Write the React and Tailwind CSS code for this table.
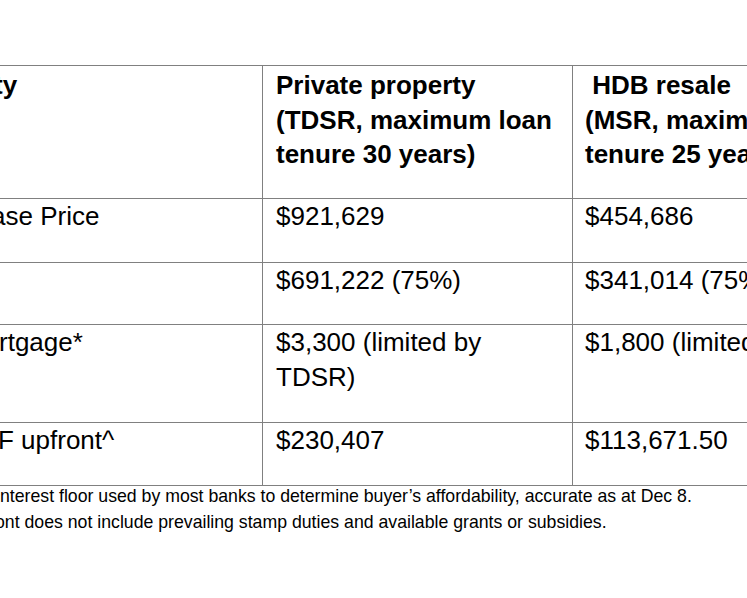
const ROWS = [
  {
    label: "ase Price",
    shift: "-ml-[9px]",
    h: "h-[64px]",
    priv: "$921,629",
    hdb: "$454,686",
  },
  {
    label: "",
    shift: "",
    h: "h-[62px]",
    priv: "$691,222 (75%)",
    hdb: "$341,014 (75%)",
  },
  {
    label: "rtgage*",
    shift: "-ml-[1px]",
    h: "h-[98px]",
    priv: "$3,300 (limited by TDSR)",
    hdb: "$1,800 (limited by MSR)",
  },
  {
    label: "F upfront^",
    shift: "-ml-[2px]",
    h: "h-[63px]",
    priv: "$230,407",
    hdb: "$113,671.50",
  },
];

export default function App() {
  return (
    <div className="w-[747px] h-[598px] overflow-hidden bg-white text-black font-['Liberation_Sans',Arial,sans-serif]">
      <div className="pt-[65px] w-[882px]">
        {/* Table */}
        <div className="border-t border-[#808080] text-[26px] leading-[34.5px]">
          <div className="grid grid-cols-[262px_310px_310px] h-[133px] border-b border-[#808080] font-bold">
            <div className="pt-[2px] overflow-hidden">
              <span className="inline-block -ml-[6px]">ty</span>
            </div>
            <div className="border-l border-[#808080] pt-[2px] px-[13px]">
              Private property
              <br />
              (TDSR, maximum loan
              <br />
              tenure 30 years)
            </div>
            <div className="border-l border-[#808080] pt-[2px] px-[12px]">
              {"\u00a0"}HDB resale
              <br />
              (MSR, maximum loan
              <br />
              tenure 25 years)
            </div>
          </div>

          {ROWS.map((row, i) => (
            <div
              key={i}
              className={`grid grid-cols-[262px_310px_310px] border-b border-[#808080] ${row.h}`}
            >
              <div className="overflow-hidden">
                <span className={`inline-block ${row.shift}`}>{row.label}</span>
              </div>
              <div className="border-l border-[#808080] px-[13px]">{row.priv}</div>
              <div className="border-l border-[#808080] px-[12px]">{row.hdb}</div>
            </div>
          ))}
        </div>

        {/* Footnotes */}
        <div className="-mt-[2px] text-[17.7px] leading-[25.5px] whitespace-nowrap">
          <p>nterest floor used by most banks to determine buyer’s affordability, accurate as at Dec 8.</p>
          <p className="-ml-[5px]">ont does not include prevailing stamp duties and available grants or subsidies.</p>
        </div>
      </div>
    </div>
  );
}
